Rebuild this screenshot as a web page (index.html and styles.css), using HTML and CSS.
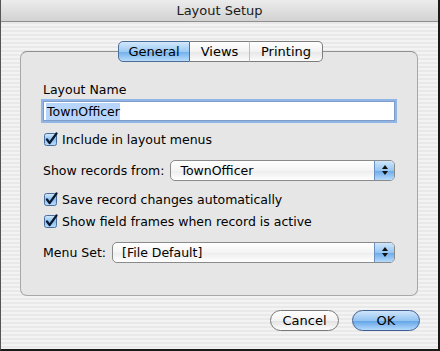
FILE: index.html
```html
<!DOCTYPE html>
<html lang="en">
<head>
    <meta charset="UTF-8">
    <title>Layout Setup</title>
    <link rel="stylesheet" href="styles.css">
</head>
<body>

    <div class="window">
        <div class="titlebar">Layout Setup</div>

        <div class="tabs">
            <span class="tab selected">General</span>
            <span class="tab views">Views</span>
            <span class="tab last">Printing</span>
        </div>

        <div class="panel">
            <div class="label">Layout Name</div>
            <div class="field"><span class="sel">TownOfficer</span></div>

            <div class="check row-include">
                <svg class="box" width="14" height="14" viewBox="0 0 14 14">
                    <rect x="0.5" y="1.5" width="12" height="12" rx="2" fill="url(#cb)" stroke="#4b6d9c"/>
                    <path d="M3 7.5 L5.6 11 L12.5 1.5" fill="none" stroke="#0b1a33" stroke-width="2.2" stroke-linecap="round" stroke-linejoin="round"/>
                </svg>
                Include in layout menus
            </div>

            <div class="popup-row row-records">
                <span>Show records from:</span>
                <div class="popup wide">
                    <span>TownOfficer</span>
                    <span class="arrows"><i class="up"></i><i class="down"></i></span>
                </div>
            </div>

            <div class="check row-save">
                <svg class="box" width="14" height="14" viewBox="0 0 14 14">
                    <rect x="0.5" y="1.5" width="12" height="12" rx="2" fill="url(#cb)" stroke="#4b6d9c"/>
                    <path d="M3 7.5 L5.6 11 L12.5 1.5" fill="none" stroke="#0b1a33" stroke-width="2.2" stroke-linecap="round" stroke-linejoin="round"/>
                </svg>
                Save record changes automatically
            </div>
            <div class="check row-frames">
                <svg class="box" width="14" height="14" viewBox="0 0 14 14">
                    <rect x="0.5" y="1.5" width="12" height="12" rx="2" fill="url(#cb)" stroke="#4b6d9c"/>
                    <path d="M3 7.5 L5.6 11 L12.5 1.5" fill="none" stroke="#0b1a33" stroke-width="2.2" stroke-linecap="round" stroke-linejoin="round"/>
                </svg>
                Show field frames when record is active
            </div>

            <div class="popup-row row-menu">
                <span>Menu Set:</span>
                <div class="popup">
                    <span>[File Default]</span>
                    <span class="arrows"><i class="up"></i><i class="down"></i></span>
                </div>
            </div>
        </div>

        <div class="buttons">
            <button class="btn">Cancel</button>
            <button class="btn default">OK</button>
        </div>
    </div>

    <svg width="0" height="0" class="defs">
        <defs>
            <linearGradient id="cb" x1="0" y1="0" x2="0" y2="1">
                <stop offset="0" stop-color="#d6ebfc"/>
                <stop offset="0.5" stop-color="#8cc0ef"/>
                <stop offset="1" stop-color="#b9dcfb"/>
            </linearGradient>
        </defs>
    </svg>

</body>
</html>
```

FILE: styles.css
```css
body {
    margin: 0;
    font-family: "DejaVu Sans", "Liberation Sans", sans-serif;
    font-size: 12.5px;
    color: #000;
    background: #fff;
}

.defs {
    position: absolute;
}

.window {
    width: 440px;
    height: 351px;
    box-sizing: border-box;
    border-left: 1px solid #555;
    border-right: 2px solid #1a1a1a;
    border-bottom: 2px solid #1a1a1a;
    background: repeating-linear-gradient(#f3f3f3 0 2px, #e9e9e9 2px 4px);
    display: flex;
    flex-direction: column;
}

.titlebar {
    height: 21px;
    line-height: 22px;
    font-size: 13px;
    text-align: center;
    background: linear-gradient(#ececec, #d2d2d2);
    border-bottom: 1px solid #8e8e8e;
    color: #1a1a1a;
}

.tabs {
    display: flex;
    justify-content: center;
    margin: 19px 0 0 2px;
    position: relative;
    z-index: 1;
    font-size: 13px;
}

.tab {
    height: 19px;
    line-height: 19px;
    text-align: center;
    border: 1px solid #7d7d7d;
    border-right: 1px solid #bdbdbd;
    border-left: none;
    background: linear-gradient(#ffffff, #f2f2f2 50%, #e6e6e6 51%, #fbfbfb);
}

.tab.selected {
    width: 70px;
    border-left: 1px solid #4d6d99;
    border-color: #4d6d99;
    border-radius: 5px 0 0 5px;
    background: linear-gradient(#d3e8fc, #9dcaf3 50%, #6eaeec 51%, #b8dcfb);
}

.tab.views {
    width: 59px;
}

.tab.last {
    width: 72px;
    border-right: 1px solid #7d7d7d;
    border-radius: 0 5px 5px 0;
}

.panel {
    margin: -11px 20px 0 19px;
    height: 245px;
    box-sizing: border-box;
    border: 1px solid #a8a8a8;
    border-top-color: #8f8f8f;
    border-radius: 7px;
    background: #e6e6e6;
    padding: 29px 22px 0 22px;
}

.label {
    height: 17px;
    line-height: 17px;
}

.field {
    margin-top: 3px;
    height: 17px;
    border: 1px solid #7e9cc6;
    box-shadow: 0 0 0 2px #8fb6e6;
    background: #fff;
    padding: 1px 2px 0;
    line-height: 17px;
}

.sel {
    background: #b7d5fa;
    padding: 1px 0 1px 1px;
}

.check {
    display: flex;
    align-items: center;
    gap: 4px;
    height: 18px;
}

.box {
    margin-left: 1px;
}

.row-include {
    margin-top: 9px;
}

.popup-row {
    display: flex;
    align-items: center;
    gap: 6px;
    height: 22px;
}

.row-records {
    margin-top: 11px;
}

.row-save {
    margin-top: 9px;
}

.row-frames {
    margin-top: 4px;
}

.row-menu {
    margin-top: 11px;
}

.popup {
    flex: 1;
    height: 19px;
    display: flex;
    align-items: center;
    border: 1px solid #8a8a8a;
    border-radius: 5px;
    background: linear-gradient(#ffffff, #f4f4f4 50%, #ececec 51%, #ffffff);
    padding-left: 9px;
    overflow: hidden;
}

.popup span:first-child {
    flex: 1;
}

.arrows {
    width: 19px;
    height: 19px;
    display: flex;
    flex-direction: column;
    align-items: center;
    justify-content: center;
    gap: 2px;
    border-left: 1px solid #6b8fc0;
    background: linear-gradient(#d0e6fb, #97c6f2 50%, #6aa9ea 51%, #b6dafb);
}

.arrows i {
    width: 0;
    height: 0;
    border-left: 3px solid transparent;
    border-right: 3px solid transparent;
}

.arrows .up {
    border-bottom: 4px solid #111;
}

.arrows .down {
    border-top: 4px solid #111;
}

.buttons {
    display: flex;
    justify-content: flex-end;
    gap: 13px;
    margin: 14px 18px 0 0;
}

.btn {
    font-family: inherit;
    font-size: 13px;
    height: 21px;
    width: 69px;
    padding: 0;
    border: 1px solid #777;
    border-radius: 11px;
    background: linear-gradient(#ffffff, #f2f2f2 50%, #e2e2e2 51%, #fcfcfc);
    color: #000;
}

.btn.default {
    width: 68px;
    border-color: #3f5f93;
    background: linear-gradient(#cfe5fb, #95c4f1 50%, #5ea2e8 51%, #b5dafb);
}
```
